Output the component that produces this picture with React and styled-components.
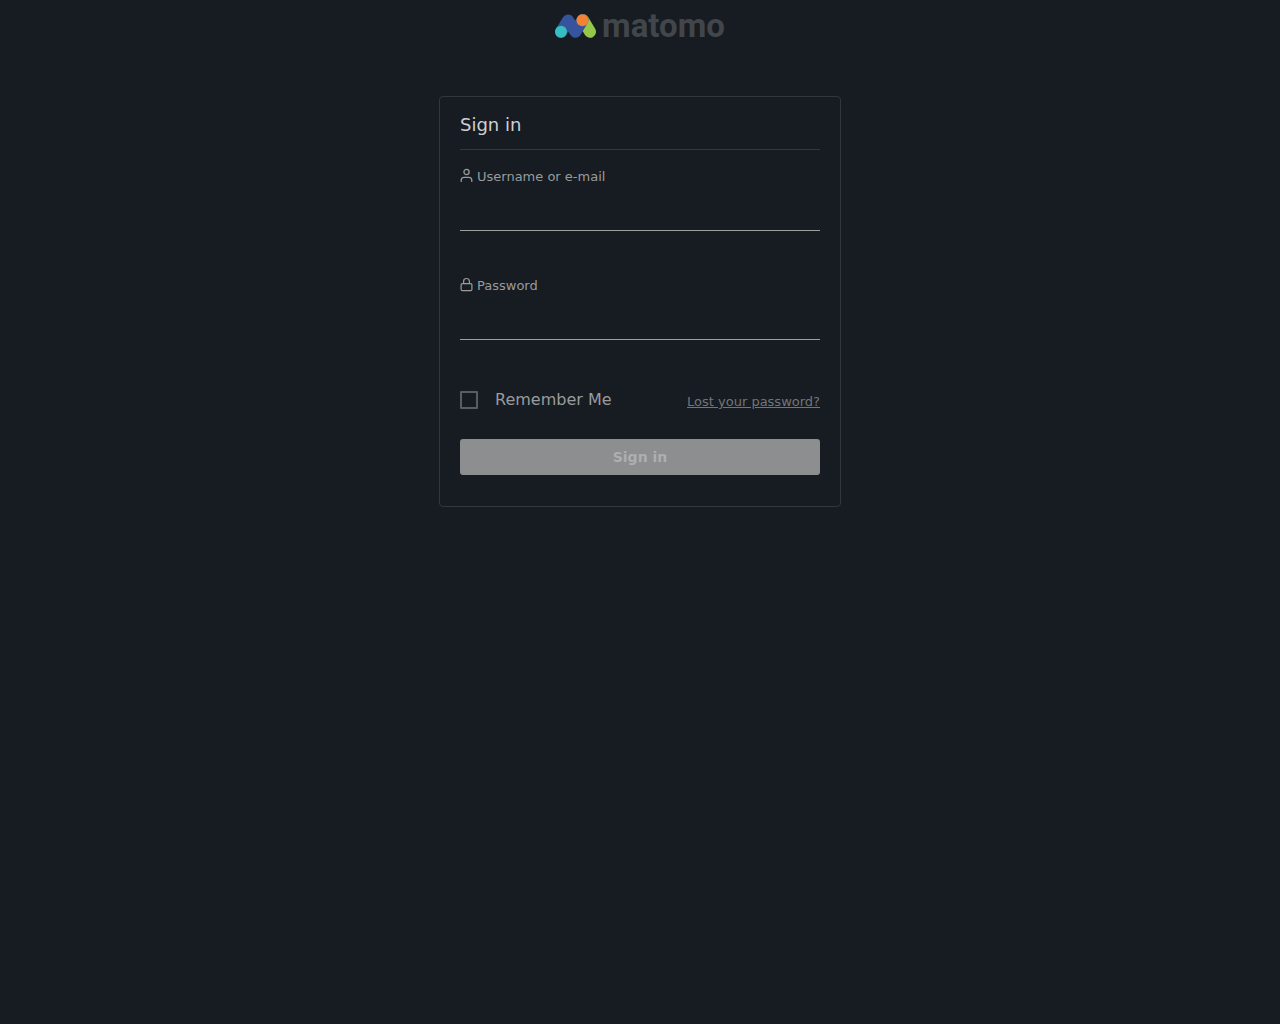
import React, { useState } from 'react'
import styled, { createGlobalStyle } from 'styled-components'

//icons
const UserIcon = () => (
  <svg width='13' height='15' viewBox='0 0 13 15' fill='none' stroke='currentColor' strokeWidth='1.3' strokeLinecap='round' aria-hidden='true'>
    <circle cx='6.5' cy='4' r='2.6' />
    <path d='M1.2 13.4 V12.2 Q1.2 9.3 4.1 9.3 H8.9 Q11.8 9.3 11.8 12.2 V13.4' />
  </svg>
)

const LockIcon = () => (
  <svg width='13' height='15' viewBox='0 0 13 15' fill='none' stroke='currentColor' strokeWidth='1.2' strokeLinecap='round' aria-hidden='true'>
    <rect x='1.1' y='6.6' width='10.8' height='7' rx='1.2' />
    <path d='M3.6 6.5 V4.4 Q3.6 1.5 6.5 1.5 Q9.4 1.5 9.4 4.4 V6.5' />
  </svg>
)

const Logo = () => (
  <LogoLink href='#' aria-label='matomo'>
    <svg width='41' height='24' viewBox='0 0 41 24' aria-hidden='true'>
      <path d='M28 6 L35 17.8' stroke='#95c748' strokeWidth='12' strokeLinecap='round' />
      <path d='M6 18 L13 6.5 L20.5 17.8 L27.5 6' fill='none' stroke='#35549d' strokeWidth='12' strokeLinecap='round' strokeLinejoin='round' />
      <circle cx='27.5' cy='6.2' r='6' fill='#f38334' />
      <circle cx='6' cy='17.8' r='6' fill='#35bfc0' />
    </svg>
    <span>matomo</span>
  </LogoLink>
)

const Field = ({ id, label, icon, type, autoComplete }) => (
  <FieldWrapper>
    <label htmlFor={id}>
      {icon}
      {label}
    </label>
    <input id={id} name={id} type={type} autoComplete={autoComplete} />
  </FieldWrapper>
)

const App = () => {
  const [remember, setRemember] = useState(false)

  return (
    <>
      <GlobalStyle />
      <Header>
        <Logo />
      </Header>
      <Main>
        <Card onSubmit={(e) => e.preventDefault()}>
          <Title>Sign in</Title>
          <Field id='login' label='Username or e-mail' type='text' autoComplete='username' icon={<UserIcon />} />
          <Field id='password' label='Password' type='password' autoComplete='current-password' icon={<LockIcon />} />
          <Options>
            <Remember>
              <input type='checkbox' checked={remember} onChange={(e) => setRemember(e.target.checked)} />
              Remember Me
            </Remember>
            <LostLink href='#lost'>Lost your password?</LostLink>
          </Options>
          <SubmitButton type='submit' disabled>Sign in</SubmitButton>
        </Card>
      </Main>
    </>
  )
}

const GlobalStyle = createGlobalStyle`
* {
  box-sizing: border-box;
}

body {
  margin: 0;
  background: #161c22;
  color: #999b9d;
  font-family: 'DejaVu Sans', Verdana, sans-serif;
  font-size: 13px;
}
`

const Header = styled.header`
display: flex;
justify-content: center;
height: 52px;
`

const LogoLink = styled.a`
display: flex;
align-items: center;
gap: 6px;
color: #42464b;
font-family: Roboto, sans-serif;
font-size: 33px;
font-weight: 700;
line-height: 52px;
text-decoration: none;
`

const Main = styled.main`
padding: 44px 16px;
`

const Card = styled.form`
width: 100%;
max-width: 402px;
margin: 0 auto;
padding: 16px 20px 31px;
border: 1px solid #32363d;
border-radius: 4px;
`

const Title = styled.h1`
margin: 0 0 16px;
padding-bottom: 12px;
border-bottom: 1px solid #32363d;
color: #ced0d2;
font-size: 18px;
font-weight: 400;
line-height: 24px;
`

const FieldWrapper = styled.div`
margin-bottom: 44px;

label {
  display: flex;
  align-items: center;
  gap: 4px;
  line-height: 21px;
}

svg {
  margin-bottom: 2px;
}

input {
  display: block;
  width: 100%;
  height: 44px;
  padding: 0;
  border: 0;
  border-bottom: 1px solid #9e9e9e;
  border-radius: 0;
  outline: none;
  background: transparent;
  color: #ced0d2;
  font: inherit;
  font-size: 16px;
}
`

const Options = styled.div`
display: flex;
align-items: flex-end;
justify-content: space-between;
margin: 48px 0 27px;
`

const Remember = styled.label`
display: flex;
align-items: center;
gap: 17px;
font-size: 16px;
line-height: 24px;

input {
  appearance: none;
  width: 18px;
  height: 18px;
  margin: 0;
  border: 2px solid #5a5d60;
  border-radius: 1px;
}

input:checked {
  background: #5a5d60;
}
`

const LostLink = styled.a`
color: #737577;
line-height: 21px;
text-decoration: underline;
`

const SubmitButton = styled.button`
display: block;
width: 100%;
height: 36px;
padding: 0 16px;
border: 0;
border-radius: 3px;
background: #8c8e8f;
color: #adafb1;
font: inherit;
font-size: 14px;
font-weight: 700;
`

export default App
